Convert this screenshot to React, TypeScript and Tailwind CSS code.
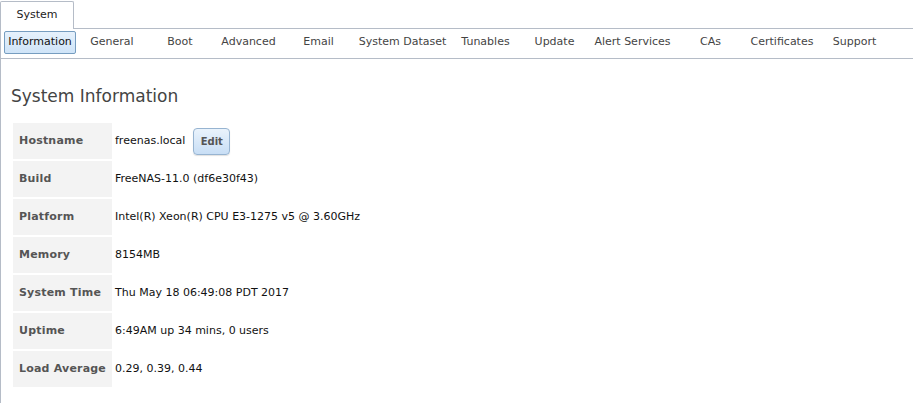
import React from "react";

const tabs: { label: string; w: string }[] = [
  { label: "General", w: "w-[72px]" },
  { label: "Boot", w: "w-[64px]" },
  { label: "Advanced", w: "w-[73px]" },
  { label: "Email", w: "w-[67px]" },
  { label: "System Dataset", w: "w-[101px]" },
  { label: "Tunables", w: "w-[65px]" },
  { label: "Update", w: "w-[73px]" },
  { label: "Alert Services", w: "w-[83px]" },
  { label: "CAs", w: "w-[73px]" },
  { label: "Certificates", w: "w-[70px]" },
  { label: "Support", w: "w-[75px]" },
];

const rows: { label: string; value: string; edit?: boolean }[] = [
  { label: "Hostname", value: "freenas.local", edit: true },
  { label: "Build", value: "FreeNAS-11.0 (df6e30f43)" },
  { label: "Platform", value: "Intel(R) Xeon(R) CPU E3-1275 v5 @ 3.60GHz" },
  { label: "Memory", value: "8154MB" },
  { label: "System Time", value: "Thu May 18 06:49:08 PDT 2017" },
  { label: "Uptime", value: "6:49AM up 34 mins, 0 users" },
  { label: "Load Average", value: "0.29, 0.39, 0.44" },
];

const App: React.FC = () => {
  return (
    <div className="w-[913px] h-[403px] bg-white overflow-hidden font-['DejaVu_Sans',sans-serif] text-[11px]">
      {/* top tab strip */}
      <div className="flex h-[29px] items-end">
        <div className="w-[74px] h-[28px] mt-[1px] border border-b-0 border-[#b5bcc7] rounded-t-[2px] bg-white flex items-center justify-center text-[#222]">
          System
        </div>
        <div className="flex-1 border-b border-[#b5bcc7]" />
      </div>

      <div className="border-l border-[#b5bcc7] h-[374px]">
        {/* sub tabs */}
        <div className="flex items-center h-[30px] pl-[3px] pb-[2px] border-b border-[#b5bcc7] text-[#444]">
          <div className="w-[72px] h-[23px] flex items-center justify-center rounded-[2px] border border-[#769dc0] bg-gradient-to-b from-[#e6f1fc] to-[#cfe4f8] text-[#111]">
            Information
          </div>
          {tabs.map((t) => (
            <div key={t.label} className={`${t.w} text-center whitespace-nowrap`}>
              {t.label}
            </div>
          ))}
        </div>

        {/* content */}
        <div className="pl-[10px] pt-[27px]">
          <h2 className="text-[17px] leading-[20px] text-[#444] mb-[17px]">System Information</h2>
          <div className="flex flex-col gap-[2px] pl-[2px]">
            {rows.map((r) => (
              <div key={r.label} className="flex h-[36px] items-center">
                <div className="w-[99px] h-full bg-[#f3f3f3] flex items-center pl-[6px] font-bold text-[#555] tracking-[0.2px]">
                  {r.label}
                </div>
                <div className="pl-[3px] flex items-center text-[#111]">
                  {r.value}
                  {r.edit && (
                    <button className="ml-[8px] w-[37px] h-[27px] rounded-[4px] border border-[#97b4d1] bg-gradient-to-b from-[#eaf3fc] to-[#c8def5] text-[10px] font-bold text-[#555] shadow-[0_1px_1px_rgba(0,0,0,0.12)]">
                      Edit
                    </button>
                  )}
                </div>
              </div>
            ))}
          </div>
        </div>
      </div>
    </div>
  );
};

export default App;
